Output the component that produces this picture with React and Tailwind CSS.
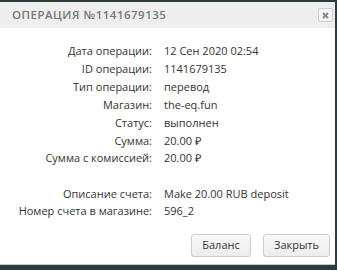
const rows = [
  ['Дата операции:', '12 Сен 2020 02:54', 'h-[18px]'],
  ['ID операции:', '1141679135', 'h-[18px]'],
  ['Тип операции:', 'перевод', 'h-[18px]'],
  ['Магазин:', 'the-eq.fun', 'h-[18px]'],
  ['Статус:', 'выполнен', 'h-[18px]'],
  ['Сумма:', '20.00 ₽', 'h-[17px]'],
  ['Сумма с комиссией:', '20.00 ₽', 'h-[18px]'],
  ['', '', 'h-[18px]'],
  ['Описание счета:', 'Make 20.00 RUB deposit', 'h-[17px]'],
  ['Номер счета в магазине:', '596_2', 'h-[18px]'],
];

const App = () => {
  return (
    <div className="w-[337px] h-[270px] bg-[#2c3b40] pt-[2px] font-['Open_Sans',sans-serif]">
      <div className="w-[335px] h-[263px] bg-white border-b border-[#c8c8c8] flex flex-col">
        <div className="h-[26px] bg-[#eeeeee] flex items-center justify-between pl-[12px] pr-[2px]">
          <span className="text-[11.5px] tracking-[0.5px] text-[#777] font-semibold uppercase">
            Операция №1141679135
          </span>
          <button className="w-[15px] h-[14px] border border-[#cfcfcf] rounded-[2px] bg-[#f4f4f4] flex items-center justify-center">
            <svg width="7" height="7" viewBox="0 0 7 7">
              <path d="M1 1 L6 6 M6 1 L1 6" stroke="#888" strokeWidth="2" />
            </svg>
          </button>
        </div>
        <div className="pt-[14px] flex flex-col text-[11px] text-[#333]">
          {rows.map(([label, value, h], i) => (
            <div key={i} className={`flex ${h} leading-[18px]`}>
              <div className="w-[152px] text-right">{label}</div>
              <div className="ml-[12px]">{value}</div>
            </div>
          ))}
        </div>
        <div className="mt-auto mb-[7px] flex justify-end gap-[12px] pr-[5px]">
          <button className="w-[60px] h-[23px] rounded-[3px] border border-[#cccccc] bg-gradient-to-b from-[#fafafa] to-[#ececec] text-[11px] text-[#333]">
            Баланс
          </button>
          <button className="w-[67px] h-[23px] rounded-[3px] border border-[#cccccc] bg-gradient-to-b from-[#fafafa] to-[#ececec] text-[11px] text-[#333]">
            Закрыть
          </button>
        </div>
      </div>
    </div>
  );
};

export default App;
